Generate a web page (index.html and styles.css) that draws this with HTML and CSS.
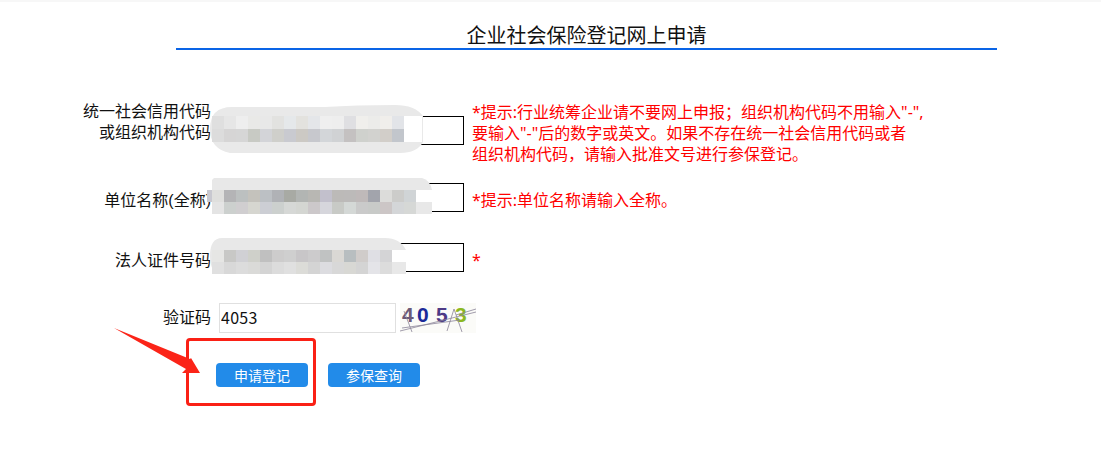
FILE: index.html
```html
<!DOCTYPE html>
<html lang="zh-CN">
<head>
    <meta charset="UTF-8">
    <title>企业社会保险登记网上申请</title>
    <link rel="stylesheet" href="styles.css">
</head>
<body>

<h1 class="title">企业社会保险登记网上申请</h1>

<form class="reg-form">
    <div class="row row-code">
        <label class="row-label row-label-double">统一社会信用代码<br>或组织机构代码</label>
        <input type="text" class="field">
        <p class="note">*提示:行业统筹企业请不要网上申报；组织机构代码不用输入"-",<br>要输入"-"后的数字或英文。如果不存在统一社会信用代码或者<br>组织机构代码，请输入批准文号进行参保登记。</p>
        <svg class="mosaic mosaic-code" width="225" height="60" viewBox="0 0 225 60">
            <path fill="#e9e9e9" d="M27 8H120Q150 6 190 6Q210 6 218 17V43Q212 54 195 54H25Q5 50 5 30Q5 8 27 8Z"/>
            <rect class="blank" x="199" y="17" fill="#fff"/>
            <rect x="7" y="17" fill="#dfdfdf"/><rect x="19" y="17" fill="#e6e6e6"/><rect x="31" y="17" fill="#eeeeee"/><rect x="43" y="17" fill="#e9e9e7"/><rect x="55" y="17" fill="#e8e8e8"/><rect x="67" y="17" fill="#e2e2e0"/><rect x="79" y="17" fill="#e5e8ea"/><rect x="91" y="17" fill="#e3e2de"/><rect x="103" y="17" fill="#e4e6e9"/><rect x="115" y="17" fill="#efefef"/><rect x="127" y="17" fill="#eeeeee"/><rect x="139" y="17" fill="#dfdfe2"/><rect x="151" y="17" fill="#f0efec"/><rect x="163" y="17" fill="#ececea"/><rect x="175" y="17" fill="#f0eeeb"/><rect x="187" y="17" fill="#e2e4e8"/>
            <rect x="7" y="30" fill="#dcdcdc"/><rect x="19" y="30" fill="#d6d5d5"/><rect x="31" y="30" fill="#d6d6d6"/><rect x="43" y="30" fill="#c8cac4"/><rect x="55" y="30" fill="#d3d4d8"/><rect x="67" y="30" fill="#cfcfcb"/><rect x="79" y="30" fill="#c9cad0"/><rect x="91" y="30" fill="#ccc9c4"/><rect x="103" y="30" fill="#c7c8cd"/><rect x="115" y="30" fill="#d3d6d9"/><rect x="127" y="30" fill="#d0d2d4"/><rect x="139" y="30" fill="#c4c1c1"/><rect x="151" y="30" fill="#cfd1cd"/><rect x="163" y="30" fill="#d2d2cf"/><rect x="175" y="30" fill="#d2cec9"/><rect x="187" y="30" fill="#c2c6cc"/>
        </svg>
    </div>

    <div class="row">
        <label class="row-label">单位名称(全称)</label>
        <input type="text" class="field">
        <p class="note">*提示:单位名称请输入全称。</p>
        <svg class="mosaic mosaic-plain" width="240" height="45" viewBox="0 0 240 45">
            <path fill="#e8e8e8" d="M14 3H222Q230 5 232 15V39H12V5Z"/>
            <rect class="blank" x="216" y="15" fill="#fff"/>
            <rect class="sliver" x="7" y="15" fill="#c8c8d0"/>
            <rect x="12" y="15" fill="#dfdfdd"/><rect x="24" y="15" fill="#b4b4b6"/><rect x="36" y="15" fill="#bcc0c0"/><rect x="48" y="15" fill="#c4c2bc"/><rect x="60" y="15" fill="#bcc0c4"/><rect x="72" y="15" fill="#b0b2b6"/><rect x="84" y="15" fill="#a8aaa4"/><rect x="96" y="15" fill="#b2b5b3"/><rect x="108" y="15" fill="#b8b7b3"/><rect x="120" y="15" fill="#c2c0cc"/><rect x="132" y="15" fill="#bcbab8"/><rect x="144" y="15" fill="#bcbab9"/><rect x="156" y="15" fill="#bfb9b9"/><rect x="168" y="15" fill="#a2a4ac"/><rect x="180" y="15" fill="#dcdcda"/><rect x="192" y="15" fill="#ccccca"/><rect x="204" y="15" fill="#d0d4d6"/>
            <rect x="12" y="27" fill="#e4e4e4"/><rect x="24" y="27" fill="#ccd0ce"/><rect x="36" y="27" fill="#d0ced0"/><rect x="48" y="27" fill="#d6d6d0"/><rect x="60" y="27" fill="#ccced4"/><rect x="72" y="27" fill="#ccd0ce"/><rect x="84" y="27" fill="#d6d8d6"/><rect x="96" y="27" fill="#d4d6d2"/><rect x="108" y="27" fill="#ccc8ca"/><rect x="120" y="27" fill="#d6d6dc"/><rect x="132" y="27" fill="#c8cac6"/><rect x="144" y="27" fill="#d4d8d6"/><rect x="156" y="27" fill="#cacaca"/><rect x="168" y="27" fill="#c8cac8"/><rect x="180" y="27" fill="#ccc6c6"/><rect x="192" y="27" fill="#d4d6d8"/><rect x="204" y="27" fill="#d6d8d6"/>
        </svg>
    </div>

    <div class="row">
        <label class="row-label">法人证件号码</label>
        <input type="text" class="field">
        <p class="note">*</p>
        <svg class="mosaic mosaic-plain" width="240" height="45" viewBox="0 0 240 45">
            <path fill="#e8e8e8" d="M22 3H185Q200 3 206 15V39H22Q10 39 10 21Q10 3 22 3Z"/>
            <rect class="blank" x="192" y="15" fill="#fff"/>
            <rect x="12" y="15" fill="#e6e6e4"/><rect x="24" y="15" fill="#c8c8c6"/><rect x="36" y="15" fill="#d0d0d4"/><rect x="48" y="15" fill="#cfd0ca"/><rect x="60" y="15" fill="#c0c0c0"/><rect x="72" y="15" fill="#cdcccc"/><rect x="84" y="15" fill="#cfcfcf"/><rect x="96" y="15" fill="#c8c6c8"/><rect x="108" y="15" fill="#cccbcc"/><rect x="120" y="15" fill="#c0c2c2"/><rect x="132" y="15" fill="#dad8d4"/><rect x="144" y="15" fill="#b8bec0"/><rect x="156" y="15" fill="#d0ccca"/><rect x="168" y="15" fill="#dfdfe4"/><rect x="180" y="15" fill="#d4d4d6"/>
            <rect x="12" y="27" fill="#e0e0e0"/><rect x="24" y="27" fill="#d8d8d8"/><rect x="36" y="27" fill="#dcdcdc"/><rect x="48" y="27" fill="#dadad8"/><rect x="60" y="27" fill="#d4d4d4"/><rect x="72" y="27" fill="#dcdcdc"/><rect x="84" y="27" fill="#e0e0e0"/><rect x="96" y="27" fill="#dcdcd8"/><rect x="108" y="27" fill="#d4d4d4"/><rect x="120" y="27" fill="#dcdce0"/><rect x="132" y="27" fill="#d8d8d8"/><rect x="144" y="27" fill="#d8d8d4"/><rect x="156" y="27" fill="#d4d4d4"/><rect x="168" y="27" fill="#e4e4e8"/><rect x="180" y="27" fill="#dcdcdc"/>
        </svg>
    </div>

    <div class="row row-captcha">
        <label class="row-label">验证码</label>
        <input type="text" class="field-captcha" value="4053">
        <svg class="captcha" width="76" height="30" viewBox="0 0 76 30">
            <rect width="76" height="30" fill="#fbfbf8"/>
            <text x="2" y="19" fill="#6b5a78">4</text>
            <text x="17" y="19" fill="#1b2a98">0</text>
            <text x="36" y="19" fill="#4d3a86">5</text>
            <text x="55" y="19" fill="#8cb820">3</text>
            <path fill="none" stroke="#8a8498" stroke-width="0.8" d="M0 28L76 9M2 25L60 17M4 8L12 29M47 28L54 6L62 29M56 12L76 6"/>
        </svg>
    </div>

    <div class="actions">
        <button type="button" class="btn">申请登记</button>
        <button type="button" class="btn">参保查询</button>
        <div class="mark-box"></div>
        <svg class="mark-arrow" width="90" height="48" viewBox="0 0 90 48">
            <path fill="#fb2418" d="M1 0L77 31L78 30L87 45H69L73 41Z"/>
        </svg>
    </div>
</form>

</body>
</html>
```

FILE: styles.css
```css
* {
    margin: 0;
    padding: 0;
    box-sizing: border-box;
}
html,
body {
    height: 100%;
}
body {
    font-family: "Liberation Sans", "Noto Sans CJK SC", sans-serif;
    font-size: 16px;
    background-color: #fff;
    color: #111;
    border-top: 2px solid #f7f7f7;
}
.title {
    width: 821px;
    margin-left: 176px;
    padding-top: 22px;
    font-size: 20px;
    font-weight: 400;
    line-height: 24px;
    text-align: center;
    border-bottom: 2px solid #0a64e6;
}
.reg-form {
    margin-top: 51px;
    padding-bottom: 60px;
}
.row {
    position: relative;
    display: flex;
    align-items: center;
    margin-bottom: 25px;
}
.row-code {
    margin-bottom: 18px;
}
.row-label {
    width: 211px;
    margin-right: 8px;
    line-height: 21px;
    text-align: right;
    flex-shrink: 0;
}
.row-label-double {
    margin-bottom: 22px;
}
.field {
    width: 245px;
    height: 29px;
    margin-bottom: 6px;
    border: 1px solid #000;
    flex-shrink: 0;
}
.note {
    margin-left: 8px;
    font-family: "Noto Sans", "Noto Sans CJK SC", sans-serif;
    color: #f00;
    line-height: 21px;
    white-space: nowrap;
}
.mosaic {
    position: absolute;
    left: 200px;
    top: -8px;
}
.mosaic-code {
    left: 205px;
    top: -2px;
}
.mosaic rect {
    width: 12px;
    height: 12px;
}
.mosaic-code rect {
    height: 13px;
}
.mosaic .blank {
    width: 18px;
    height: 12px;
}
.mosaic-code .blank {
    height: 26px;
}
.mosaic .sliver {
    width: 5px;
}
.row-captcha {
    height: 30px;
}
.row-captcha .row-label {
    margin-bottom: 2px;
}
.field-captcha {
    width: 177px;
    height: 30px;
    padding: 0 0 2px 1px;
    border: 1px solid #e0e0e0;
    font-family: "Noto Sans CJK SC", "Liberation Sans", sans-serif;
    font-size: 16px;
    letter-spacing: 0.3px;
    color: #111;
}
.captcha {
    margin-left: 4px;
}
.captcha text {
    font-family: "Liberation Sans", sans-serif;
    font-size: 21px;
    font-weight: 700;
}
.actions {
    position: relative;
    display: flex;
    gap: 20px;
    margin: 30px 0 0 216px;
}
.btn {
    width: 92px;
    height: 24px;
    border: none;
    border-radius: 4px;
    background-color: #228be9;
    color: #fff;
    font-family: "Liberation Sans", "Noto Sans CJK SC", sans-serif;
    font-size: 14px;
}
.mark-box {
    position: absolute;
    left: -30px;
    top: -25px;
    width: 130px;
    height: 68px;
    border: 3px solid #fa2015;
    border-radius: 4px;
}
.mark-arrow {
    position: absolute;
    left: -103px;
    top: -35px;
}
```
